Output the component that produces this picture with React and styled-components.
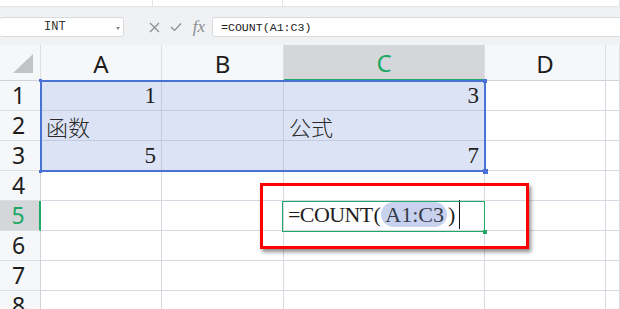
import React from "react";
import styled, { createGlobalStyle, css } from "styled-components";

const Global = createGlobalStyle`
  html, body { margin: 0; padding: 0; background: #ffffff; }
  body { width: 620px; height: 309px; overflow: hidden; font-family: "Noto Sans", "Liberation Sans", sans-serif; }
  * { box-sizing: border-box; }
`;

const COLS = [41, 121, 122, 201, 121];
const GRID = "#d6d9e2";
const GREEN = "#20a866";
const BLUE = "#4a72d4";

const Page = styled.div`
  width: 620px;
  height: 309px;
  overflow: hidden;
  display: flex;
  flex-direction: column;
`;

const TopStrip = styled.div`
  height: 6px;
  flex-shrink: 0;
  display: flex;
  background: #ffffff;
  box-shadow: 0 1px 2px rgba(0, 0, 0, 0.06);
  position: relative;
  z-index: 1;
`;

const StripSeg = styled.div`
  width: ${(p) => p.$w}px;
  border-right: 1px solid #e4e5e7;
  flex: ${(p) => (p.$w ? "none" : "1")};
`;

const FormulaBar = styled.div`
  height: 39px;
  flex-shrink: 0;
  background: #f0f1f3;
  display: flex;
  align-items: flex-start;
  padding-top: 11px;
`;

const NameBox = styled.div`
  width: 125px;
  height: 20px;
  margin-left: -1px;
  background: #fff;
  border: 1px solid #d9dbdf;
  border-radius: 3px;
  display: flex;
  align-items: center;
  padding-left: 44px;
  position: relative;
  font-family: "Liberation Mono", monospace;
  font-size: 12px;
  color: #333;
`;

const Caret = styled.span`
  position: absolute;
  right: 3px;
  top: 9px;
  width: 0;
  height: 0;
  border-left: 2.5px solid transparent;
  border-right: 2.5px solid transparent;
  border-top: 3px solid #888;
`;

const BarIcons = styled.div`
  display: flex;
  align-items: center;
  height: 20px;
  margin-left: 19px;
  width: 68px;
  color: #8a8c90;
`;

const IconSlot = styled.span`
  width: ${(p) => p.$w}px;
  display: flex;
  align-items: center;
  justify-content: center;
`;

const Fx = styled.span`
  font-family: "Liberation Serif", serif;
  font-style: italic;
  font-size: 17px;
  color: #8a8c90;
  line-height: 20px;
`;

const FormulaInput = styled.div`
  flex: 1;
  height: 20px;
  margin-left: 1px;
  margin-right: -4px;
  background: #fff;
  border: 1px solid #d9dbdf;
  border-radius: 3px;
  padding-left: 8px;
  display: flex;
  align-items: center;
  font-family: "Liberation Mono", monospace;
  font-size: 11.6px;
  color: #222;
  white-space: pre;
`;

const SheetWrap = styled.div`
  position: relative;
  flex: 1;
  min-height: 0;
`;

const Grid = styled.div`
  display: grid;
  grid-template-columns: ${COLS.map((c) => c + "px").join(" ")} 1fr;
  grid-template-rows: 36px repeat(8, 30px);
`;

const HeadCell = styled.div`
  background: ${(p) => (p.$active ? "#d4d6da" : "#f6f7f8")};
  color: ${(p) => (p.$active ? GREEN : "#1d1d1d")};
  border-right: 1px solid #dcdee2;
  border-bottom: 1px solid #d0d3da;
  display: flex;
  align-items: center;
  justify-content: center;
  font-size: 24px;
  font-family: "Noto Sans", "Liberation Sans", sans-serif;
  line-height: 1;
  padding-top: 2px;
  ${(p) =>
    p.$active &&
    css`
      border-bottom: 2px solid ${GREEN};
    `}
`;

const CornerCell = styled(HeadCell)`
  align-items: flex-end;
  justify-content: flex-start;
  padding: 0 0 7px 13px;
`;

const RowHead = styled.div`
  background: ${(p) => (p.$active ? "#d4d6da" : "#f6f7f8")};
  color: ${(p) => (p.$active ? GREEN : "#1d1d1d")};
  border-right: ${(p) => (p.$active ? `2px solid ${GREEN}` : "1px solid #d0d3da")};
  border-bottom: 1px solid #dcdee2;
  display: flex;
  align-items: center;
  justify-content: center;
  padding-right: 3px;
  font-size: 23px;
  font-family: "Noto Sans", "Liberation Sans", sans-serif;
  line-height: 1;
`;

const Cell = styled.div`
  background: ${(p) => (p.$sel ? "#dce3f4" : "#ffffff")};
  border-right: 1px solid ${(p) => (p.$sel ? "#c4cbe0" : GRID)};
  border-bottom: 1px solid ${(p) => (p.$sel ? "#c4cbe0" : GRID)};
  display: flex;
  align-items: flex-end;
  justify-content: ${(p) => (p.$align === "right" ? "flex-end" : "flex-start")};
  padding: 0 5px 1px 5px;
  font-family: "Liberation Serif", "Noto Sans CJK SC", serif;
  font-size: 23px;
  line-height: 26px;
  color: #1e1e1e;
  white-space: nowrap;
  overflow: visible;
`;

const CjkText = styled.span`
  font-family: "Noto Sans CJK SC", sans-serif;
  font-size: 22px;
  font-weight: 300;
  line-height: 26px;
  color: #2a2a2a;
`;

const EditText = styled.span`
  display: flex;
  align-items: center;
  height: 29px;
  margin-left: -1px;
  font-family: "Liberation Serif", serif;
  font-size: 22px;
  color: #1e1e1e;
  letter-spacing: -0.6px;
`;

const Paren = styled.span`
  margin: 0 ${(p) => p.$r || 0}px 0 ${(p) => p.$l || 0}px;
`;

const RefPill = styled.span`
  background: #c8d2ef;
  border-radius: 13px;
  padding: 1px 3px 0 4px;
  height: 25px;
  display: inline-flex;
  align-items: center;
  color: #333b4a;
  letter-spacing: 0;
`;

const TextCaret = styled.span`
  width: 1px;
  height: 29px;
  background: #111;
  margin-left: 4px;
`;

const SelectionBox = styled.div`
  position: absolute;
  left: 40px;
  top: 35px;
  width: 446px;
  height: 92px;
  border: 2px solid ${BLUE};
  pointer-events: none;
`;

const Handle = styled.span`
  position: absolute;
  width: 5px;
  height: 5px;
  background: ${(p) => p.$color};
  ${(p) => p.$pos}
`;

const ActiveBox = styled.div`
  position: absolute;
  left: 282px;
  top: 156px;
  width: 203px;
  height: 31px;
  border: 1px solid ${GREEN};
  pointer-events: none;
`;

const RedBox = styled.div`
  position: absolute;
  left: 260px;
  top: 138px;
  width: 269px;
  height: 66px;
  border: 3px solid #ff0000;
  box-shadow: 2px 3px 4px rgba(0, 0, 0, 0.45);
  pointer-events: none;
`;

const rows = [
  ["1", "", "3"],
  ["函数", "", "公式"],
  ["5", "", "7"],
  [],
  [],
  [],
  [],
  [],
];

const colNames = ["A", "B", "C", "D", ""];

function CellContent({ v }) {
  if (!v) return null;
  if (/^\d+$/.test(v)) return v;
  return <CjkText>{v}</CjkText>;
}

export default function App() {
  return (
    <>
      <Global />
      <Page>
        <TopStrip>
          <StripSeg $w={153} />
          <StripSeg $w={130} />
          <StripSeg />
        </TopStrip>
        <FormulaBar>
          <NameBox>
            INT
            <Caret />
          </NameBox>
          <BarIcons>
            <IconSlot $w={22}>
              <svg width="11" height="11" viewBox="0 0 11 11">
                <path d="M1 1 L10 10 M10 1 L1 10" stroke="#8a8c90" strokeWidth="1.2" />
              </svg>
            </IconSlot>
            <IconSlot $w={22}>
              <svg width="12" height="10" viewBox="0 0 12 10">
                <path d="M1 5 L4.5 8.5 L11 1.5" stroke="#8a8c90" strokeWidth="1.2" fill="none" />
              </svg>
            </IconSlot>
            <IconSlot $w={24}>
              <Fx>fx</Fx>
            </IconSlot>
          </BarIcons>
          <FormulaInput>=COUNT(A1:C3)</FormulaInput>
        </FormulaBar>
        <SheetWrap>
          <Grid>
            <CornerCell>
              <svg width="20" height="19" viewBox="0 0 20 19">
                <polygon points="20,0 20,19 0,19" fill="#c2c3c5" />
              </svg>
            </CornerCell>
            {colNames.map((c, i) => (
              <HeadCell key={"h" + i} $active={c === "C"}>
                {c}
              </HeadCell>
            ))}
            {rows.map((r, ri) => (
              <React.Fragment key={"r" + ri}>
                <RowHead $active={ri === 4}>{ri + 1}</RowHead>
                {colNames.map((_, ci) => {
                  const v = r[ci] || "";
                  const sel = ri < 3 && ci < 3;
                  const align = /^\d+$/.test(v) ? "right" : "left";
                  if (ri === 4 && ci === 2) {
                    return (
                      <Cell key={ci} $align="left">
                        <EditText>
                          =COUNT<Paren $l={1} $r={1}>(</Paren>
                          <RefPill>A1:C3</RefPill>
                          <Paren $l={1}>)</Paren>
                          <TextCaret />
                        </EditText>
                      </Cell>
                    );
                  }
                  return (
                    <Cell key={ci} $sel={sel} $align={align}>
                      <CellContent v={v} />
                    </Cell>
                  );
                })}
              </React.Fragment>
            ))}
          </Grid>
          <SelectionBox>
            <Handle $color={BLUE} $pos="left:-3px; top:-3px; width:3px; height:3px;" />
            <Handle $color={BLUE} $pos="right:-3px; top:-3px; width:4px; height:4px;" />
            <Handle $color={BLUE} $pos="left:-3px; bottom:-3px; width:3px; height:3px;" />
            <Handle $color={BLUE} $pos="right:-4px; bottom:-4px;" />
          </SelectionBox>
          <ActiveBox>
            <Handle $color={GREEN} $pos="right:-3px; bottom:-3px; width:4px; height:4px;" />
          </ActiveBox>
          <RedBox />
        </SheetWrap>
      </Page>
    </>
  );
}
